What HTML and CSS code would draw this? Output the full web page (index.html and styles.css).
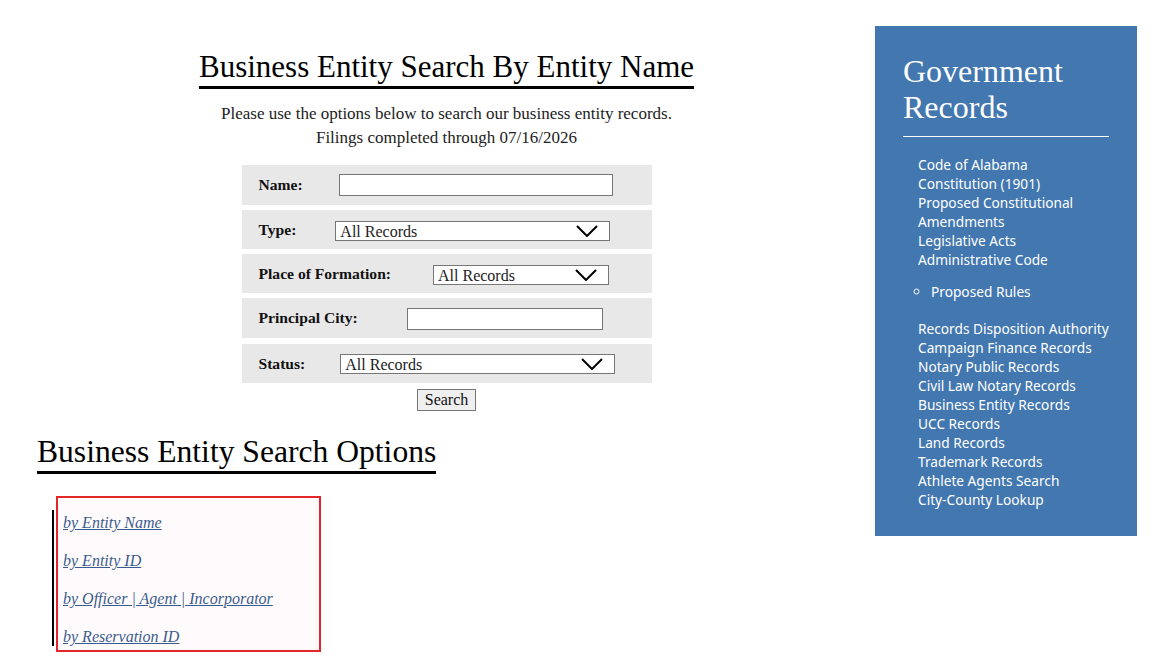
FILE: index.html
```html
<!DOCTYPE html>
<html lang="en">
<head>
<meta charset="utf-8">
<title>Business Entity Search</title>
<link rel="stylesheet" href="styles.css">
</head>
<body>
<div class="page">
  <main class="main">
    <section class="intro">
      <h1 class="title">Business Entity Search By Entity Name</h1>
      <p class="lead">Please use the options below to search our business entity records.<br>Filings completed through 07/16/2026</p>
      <form class="search-form">
        <div class="row row-name">
          <label class="lbl">Name:</label>
          <input class="field field-name" type="text">
        </div>
        <div class="row row-type">
          <label class="lbl">Type:</label>
          <div class="sel sel-type">
            <select><option>All Records</option></select>
            <svg class="chev" viewBox="0 0 22 12" width="22" height="12"><path d="M1 1 L11 11 L21 1" fill="none" stroke="#000" stroke-width="2"/></svg>
          </div>
        </div>
        <div class="row row-place">
          <label class="lbl">Place of Formation:</label>
          <div class="sel sel-place">
            <select><option>All Records</option></select>
            <svg class="chev" viewBox="0 0 22 12" width="22" height="12"><path d="M1 1 L11 11 L21 1" fill="none" stroke="#000" stroke-width="2"/></svg>
          </div>
        </div>
        <div class="row row-city">
          <label class="lbl">Principal City:</label>
          <input class="field field-city" type="text">
        </div>
        <div class="row row-status">
          <label class="lbl">Status:</label>
          <div class="sel sel-status">
            <select><option>All Records</option></select>
            <svg class="chev" viewBox="0 0 22 12" width="22" height="12"><path d="M1 1 L11 11 L21 1" fill="none" stroke="#000" stroke-width="2"/></svg>
          </div>
        </div>
        <div class="actions"><button type="button" class="btn">Search</button></div>
      </form>
    </section>
    <section class="options">
      <h2 class="subtitle">Business Entity Search Options</h2>
      <div class="opt-box">
        <div class="opt-list">
          <a href="#" class="opt-link">by Entity Name</a>
          <a href="#" class="opt-link">by Entity ID</a>
          <a href="#" class="opt-link">by Officer | Agent | Incorporator</a>
          <a href="#" class="opt-link">by Reservation ID</a>
        </div>
      </div>
    </section>
  </main>
  <aside class="sidebar">
    <h2 class="side-title">Government Records</h2>
    <ul class="side-list">
      <li><a href="#">Code of Alabama</a></li>
      <li><a href="#">Constitution (1901)</a></li>
      <li><a href="#">Proposed Constitutional Amendments</a></li>
      <li><a href="#">Legislative Acts</a></li>
      <li><a href="#">Administrative Code</a>
        <ul class="sub-list"><li><a href="#">Proposed Rules</a></li></ul>
      </li>
      <li><a href="#">Records Disposition Authority</a></li>
      <li><a href="#">Campaign Finance Records</a></li>
      <li><a href="#">Notary Public Records</a></li>
      <li><a href="#">Civil Law Notary Records</a></li>
      <li><a href="#">Business Entity Records</a></li>
      <li><a href="#">UCC Records</a></li>
      <li><a href="#">Land Records</a></li>
      <li><a href="#">Trademark Records</a></li>
      <li><a href="#">Athlete Agents Search</a></li>
      <li><a href="#">City-County Lookup</a></li>
    </ul>
  </aside>
</div>
</body>
</html>
```
FILE: styles.css
```css
* { box-sizing: border-box; }
html, body { margin: 0; padding: 0; background: #fff; }
body { font-family: "Liberation Serif", "DejaVu Serif", serif; color: #111; }

.page { display: flex; align-items: flex-start; }

.main { width: 857px; margin-left: 18px; }

.intro { display: flex; flex-direction: column; align-items: center; padding-top: 50px; }

.title {
  margin: 0;
  font-weight: normal;
  font-size: 31px;
  line-height: 34px;
  padding-bottom: 2px;
  border-bottom: 3px solid #000;
  color: #000;
}

.lead {
  margin: 13px 0 0;
  text-align: center;
  font-size: 17px;
  line-height: 24px;
  color: #222;
}

.search-form { margin-top: 15px; width: 410px; display: flex; flex-direction: column; gap: 5px; }

.row {
  background: #e8e8e8;
  height: 40px;
  display: flex;
  align-items: center;
  padding-left: 17px;
}
.row-type, .row-place { height: 39px; }
.row-status { height: 39px; margin-top: 1px; }

.lbl { font-weight: bold; font-size: 15.6px; color: #111; }

.field {
  height: 22px;
  border: 1px solid #767676;
  background: #fff;
  padding: 0 4px;
  font-family: inherit;
}
.field-name { width: 274px; margin-left: 36px; }
.field-city { width: 196px; margin-left: 49px; margin-top: 2px; }

.sel { position: relative; height: 20px; }
.sel select {
  appearance: none;
  -webkit-appearance: none;
  width: 100%;
  height: 20px;
  border: 1px solid #767676;
  background: #fff;
  border-radius: 0;
  font-family: "Liberation Serif", "DejaVu Serif", serif;
  font-size: 16px;
  color: #222;
  padding: 1px 4px 0;
  line-height: 18px;
}
.chev { position: absolute; right: 12px; top: 4px; pointer-events: none; }
.sel-type { width: 275px; margin-left: 39px; margin-top: 2px; }
.sel-place { width: 176px; margin-left: 42px; margin-top: 2px; }
.sel-status { width: 275px; margin-left: 35px; margin-top: 0; }

.actions { display: flex; justify-content: center; margin-top: 1px; }
.btn {
  font-family: "Liberation Serif", "DejaVu Serif", serif;
  font-size: 16px;
  height: 22px;
  width: 59px;
  padding: 0;
  border: 1px solid #767676;
  background: #efefef;
  color: #111;
  border-radius: 0;
  margin-left: 0;
}

.options { padding-left: 19px; margin-top: 23px; }

.subtitle {
  display: inline-block;
  margin: 0;
  font-weight: normal;
  font-size: 31.6px;
  line-height: 35px;
  padding-bottom: 2px;
  border-bottom: 3px solid #000;
  color: #000;
}

.opt-box {
  margin-top: 22px;
  margin-left: 19px;
  width: 265px;
  border: 2px solid #e3262a;
  background: #fffbfc;
  padding: 12px 0 4px 0;
  position: relative;
}
.opt-list {
  display: flex;
  flex-direction: column;
  gap: 20px;
  border-left: 2px solid #000;
  margin-left: -6px;
  padding-left: 9px;
  padding-top: 4px;
}
.opt-link {
  font-style: italic;
  font-size: 16px;
  line-height: 18px;
  color: #3b5b8f;
  text-decoration: underline;
}

.sidebar {
  margin-top: 26px;
  width: 262px;
  height: 510px;
  background: #4277b0;
  padding: 27px 28px 0 28px;
  color: #fff;
}
.side-title {
  margin: 0;
  font-family: "Liberation Serif", "DejaVu Serif", serif;
  font-weight: normal;
  font-size: 32px;
  line-height: 36px;
  padding-bottom: 11px;
  border-bottom: 1px solid #fff;
}
.side-list {
  list-style: none;
  margin: 18px 0 0;
  padding: 0 0 0 15px;
  font-family: "Noto Sans", "Open Sans", sans-serif;
  font-size: 13.7px;
  line-height: 19px;
}
.side-list a { color: #fff; text-decoration: none; }
.sub-list {
  list-style: circle;
  margin: 13px 0 18px;
  padding-left: 13px;
}
```
